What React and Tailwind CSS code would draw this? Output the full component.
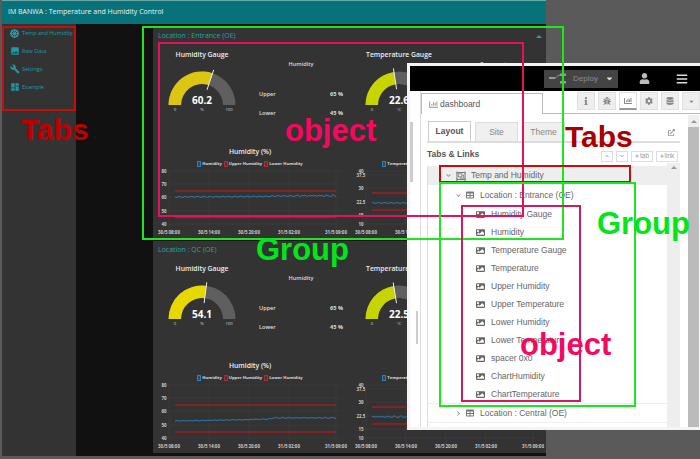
import React from "react";
import { MdBuild, MdDashboard, MdPhoto } from "react-icons/md";
import {
    FaBars, FaBug, FaChartBar, FaCog, FaDatabase, FaExternalLinkAlt, FaInfo, FaPlus,
    FaRegObjectGroup, FaTable, FaUser, FaImage, FaChevronDown, FaChevronRight, FaChevronUp, FaCaretDown,
} from "react-icons/fa";

const navItems = [
    { label: "Temp and Humidity", icon: <WheelIcon /> },
    { label: "Raw Data", icon: <MdPhoto size={10} /> },
    { label: "Settings", icon: <MdBuild size={10} /> },
    { label: "Example", icon: <MdDashboard size={10} /> },
];

const widgets = [
    "Humidity Gauge", "Humidity", "Temperature Gauge", "Temperature", "Upper Humidity",
    "Upper Temperature", "Lower Humidity", "Lower Temperature", "spacer 0x0", "ChartHumidity", "ChartTemperature",
];

const xLabels = ["30/5 08:00", "30/5 14:00", "30/5 20:00", "31/5 02:00", "31/5 09:00"];

function WheelIcon() {
    return (
        <svg width="9" height="9" viewBox="0 0 18 18" fill="none" stroke="currentColor">
            <circle cx="9" cy="9" r="7" strokeWidth="3.5" />
            <path d="M9 1v16M1 9h16M3.5 3.5l11 11M14.5 3.5l-11 11" strokeWidth="2" />
        </svg>
    );
}

// Small repeatable noise so the series keep the same shape on each render
function noisyLine(x0, x1, baseY, amp, seed, drift = 0) {
    const pts = [];
    for (let x = x0; x <= x1; x += 1) {
        const t = (x - x0) / (x1 - x0);
        const n = Math.sin(x * 2.7 + seed) * 0.5 + Math.sin(x * 7.3 + seed * 2) * 0.5;
        const spike = Math.sin(x * 0.9 + seed) > 0.97 ? -amp * 2 : 0;
        const step = t > 0.6 ? drift : drift * t;
        pts.push(`${x.toFixed(1)},${(baseY + n * amp + step + spike).toFixed(1)}`);
    }
    return pts.join(" ");
}

function Gauge({ value, max, unit, color, fraction }) {
    const cx = 40, cy = 38, R = 33.5, r = 21;
    const a = Math.PI * (1 - fraction);
    const px = (rad, ang) => (cx + rad * Math.cos(ang)).toFixed(1);
    const py = (rad, ang) => (cy - rad * Math.sin(ang)).toFixed(1);
    return (
        <svg width="80" height="48" viewBox="0 0 80 48" className="block">
            <path d={`M${cx - R} ${cy}A${R} ${R} 0 0 1 ${cx + R} ${cy}L${cx + r} ${cy}A${r} ${r} 0 0 0 ${cx - r} ${cy}Z`} fill="#5f5f5f" />
            <path d={`M${cx - R} ${cy}A${R} ${R} 0 0 1 ${px(R, a)} ${py(R, a)}L${px(r, a)} ${py(r, a)}A${r} ${r} 0 0 0 ${cx - r} ${cy}Z`} fill={color} />
            <line x1={px(16, a)} y1={py(16, a)} x2={px(37, a)} y2={py(37, a)} stroke="#eeeeee" strokeWidth="1" />
            <text x={cx} y={cy - 1} textAnchor="middle" fontSize="10" fontWeight="700" fill="#ffffff">{value}</text>
            <text x={cx - 27} y={cy + 6} textAnchor="middle" fontSize="4.2" fill="#dddddd">0</text>
            <text x={cx} y={cy + 6} textAnchor="middle" fontSize="4.2" fill="#dddddd">{unit}</text>
            <text x={cx + 27} y={cy + 6} textAnchor="middle" fontSize="4.2" fill="#dddddd">{max}</text>
        </svg>
    );
}

function Chart({ yLabels, upper, lower, baseY, amp, seed, drift, lineEnd }) {
    return (
        <svg width="190" height="68" viewBox="0 0 190 68" className="block">
            {yLabels.map(([label, y]) => (
                <g key={label}>
                    <text x="6" y={y + 1.7} textAnchor="middle" fontSize="4.4" fontWeight="700" fill="#cccccc">{label}</text>
                    <line x1="11" x2="183" y1={y} y2={y} stroke="#434343" strokeWidth="0.5" />
                </g>
            ))}
            {[11, 51, 91, 131, 178].map((x, i) => (
                <g key={x}>
                    <line x1={x} x2={x} y1="1" y2="60" stroke="#434343" strokeWidth="0.5" />
                    <text x={x} y="65" textAnchor="middle" fontSize="4.4" fontWeight="700" fill="#cccccc">{xLabels[i]}</text>
                </g>
            ))}
            <line x1="17" x2={lineEnd} y1={upper} y2={upper} stroke="#a11f25" strokeWidth="1.3" />
            <line x1="17" x2={lineEnd} y1={lower} y2={lower} stroke="#a11f25" strokeWidth="1.3" />
            <polyline points={noisyLine(17, lineEnd, baseY, amp, seed, drift)} fill="none" stroke="#2f7fb8" strokeWidth="0.9" />
        </svg>
    );
}

function Legend({ items }) {
    return (
        <div className="flex items-center justify-center gap-[2px] h-[10px] pr-[13px] text-[4.2px] font-bold text-[#dddddd] whitespace-nowrap">
            {items.map((item, i) => (
                <span key={item} className="flex items-center gap-[1px]">
                    <span className={`w-[4px] h-[6px] border ${i === 0 ? "border-[#2f7fb8] bg-[#2f7fb8]/30" : "border-[#b02a2f] bg-[#b02a2f]/30"}`} />
                    {item}
                </span>
            ))}
        </div>
    );
}

function Widget({ gaugeTitle, tableTitle, gauge, upper, lower, chartTitle, legend, chart }) {
    return (
        <div className="w-[197px] shrink-0 flex flex-col">
            <div className="flex h-[116px]">
                <div className="w-[88px] flex flex-col items-center">
                    <div className="h-[11px] mt-[4px] text-[6.8px] font-semibold leading-[11px] text-[#eeeeee] whitespace-nowrap">{gaugeTitle}</div>
                    <div className="mt-[7px]"><Gauge {...gauge} /></div>
                </div>
                <div className="w-[97px] pl-[13px] flex flex-col text-[5.6px] font-semibold text-[#dddddd]">
                    <div className="text-center mt-[15px] h-[24px]">{tableTitle}</div>
                    <div className="flex justify-between mt-[6px]"><span>Upper</span><span className="font-bold">{upper}</span></div>
                    <div className="flex justify-between mt-[11px]"><span>Lower</span><span className="font-bold">{lower}</span></div>
                </div>
            </div>
            <div className="text-center h-[13px] mt-[-15px] pr-[13px] text-[6.8px] font-semibold leading-[12px] text-[#eeeeee] whitespace-nowrap">{chartTitle}</div>
            <Legend items={legend} />
            <Chart {...chart} />
        </div>
    );
}

function LocationCard({ title, collapse, humidity, temperature, className }) {
    const tableH = { gaugeTitle: "Humidity Gauge", tableTitle: "Humidity", upper: "65 %", lower: "45 %", chartTitle: "Humidity (%)", legend: ["Humidity", "Upper Humidity", "Lower Humidity"] };
    const tableT = { gaugeTitle: "Temperature Gauge", tableTitle: "Temperature", upper: "30 °C", lower: "15 °C", chartTitle: "Temperature (°C)", legend: ["Temperature", "Upper Temperature", "Lower Temperature"] };
    return (
        <section className={`bg-[#333333] ${className}`}>
            <div className="flex items-center justify-between h-[18px] pl-[5px] pr-[4px] text-[7px] font-medium text-[#1fa5b0]">
                <span>{title}</span>
                {collapse && <CaretUp />}
            </div>
            <div className="flex pl-[5px]">
                <Widget {...tableH} {...humidity} />
                <Widget {...tableT} {...temperature} />
            </div>
        </section>
    );
}

function CaretUp() {
    return <span className="w-0 h-0 border-x-[3px] border-x-transparent border-b-[3px] border-b-[#1fa5b0]" />;
}

function Dashboard() {
    const humidityY = [["80", 2], ["70", 15], ["60", 28], ["50", 42], ["40", 55]];
    const tempY = [["40", 2], ["37.5", 6], ["30", 19], ["22.5", 33], ["15", 46], ["10", 55]];
    return (
        <div className="ml-[2px] w-[544px] h-[456px] flex flex-col font-['Open_Sans',sans-serif]">
            <header className="h-[24px] shrink-0 bg-[#08727a] border-t border-[#6aa9a9] flex items-center pl-[6px] text-[7px] font-medium text-[#e8f4f4]">
                IM BANWA : Temperature and Humidity Control
            </header>
            <div className="flex flex-1 min-h-0">
                <nav className="w-[74px] shrink-0 bg-[#333333] flex flex-col">
                    {navItems.map((item) => (
                        <div key={item.label} className="h-[18px] flex items-center gap-[2px] pl-[7px] text-[5.5px] text-[#1f9aa5] whitespace-nowrap">
                            <span className="w-[11px] flex justify-center">{item.icon}</span>
                            {item.label}
                        </div>
                    ))}
                </nav>
                <main className="flex-1 bg-[#111111] pl-[77px] pt-[3px] flex flex-col gap-[3px] overflow-hidden">
                    <LocationCard
                        title="Location : Entrance (OE)"
                        collapse
                        className="h-[211px]"
                        humidity={{
                            gauge: { value: "60.2", max: "100", unit: "%", color: "#dcc612", fraction: 0.602 },
                            chart: { yLabels: humidityY, upper: 22, lower: 48.5, baseY: 28, amp: 0.9, seed: 1, drift: -1, lineEnd: 178 },
                        }}
                        temperature={{
                            gauge: { value: "22.6", max: "50", unit: "°C", color: "#c6d400", fraction: 0.452 },
                            chart: { yLabels: tempY, upper: 24, lower: 41, baseY: 34, amp: 0.8, seed: 3, drift: 0, lineEnd: 178 },
                        }}
                    />
                    <LocationCard
                        title="Location : QC (OE)"
                        className="h-[212px]"
                        humidity={{
                            gauge: { value: "54.1", max: "100", unit: "%", color: "#e6d800", fraction: 0.541 },
                            chart: { yLabels: humidityY, upper: 22, lower: 49, baseY: 38, amp: 0.5, seed: 2, drift: -3, lineEnd: 178 },
                        }}
                        temperature={{
                            gauge: { value: "22.5", max: "50", unit: "°C", color: "#c6d400", fraction: 0.45 },
                            chart: { yLabels: tempY, upper: 24, lower: 41, baseY: 34, amp: 0.7, seed: 4, drift: 0, lineEnd: 178 },
                        }}
                    />
                </main>
            </div>
        </div>
    );
}

function IconButton({ children, active }) {
    return (
        <span className={`w-[18px] h-[18px] flex items-center justify-center border border-[#e0e0e0] text-[#888888] ${active ? "bg-white border-b-2 border-b-[#999999]" : "bg-[#eeeeee]"}`}>
            {children}
        </span>
    );
}

function SmallButton({ children, className = "" }) {
    return (
        <span className={`h-[11px] flex items-center justify-center gap-[1px] border border-[#dddddd] text-[6.5px] font-normal text-[#999999] ${className}`}>
            {children}
        </span>
    );
}

function NodeRedPanel() {
    return (
        <aside className="absolute left-[407px] top-[63px] w-[293px] h-[367px] bg-white border-[3px] border-r-0 border-[#f4f4f4] flex flex-col font-['Liberation_Sans',sans-serif] overflow-hidden">
            <div className="h-[25px] shrink-0 bg-black flex items-center">
                <div className="ml-[134px] w-[74px] h-[18px] bg-[#444444] flex items-center pl-[5px] text-[8px] text-[#8c8c8c]">
                    <svg width="17" height="12" viewBox="0 0 17 12" fill="none" className="mr-[7px]">
                        <rect x="0" y="4" width="6" height="2" fill="#999999" />
                        <path d="M6 5c2 0 2-3 5-3" stroke="#999999" />
                        <rect x="11" y="0.5" width="6" height="2.5" fill="#999999" />
                        <rect x="11" y="8" width="6" height="2.5" fill="#999999" />
                    </svg>
                    Deploy
                    <FaCaretDown size={9} className="ml-[7px] text-[#dddddd]" />
                </div>
                <FaUser size={11} className="ml-[21px] text-[#bbbbbb]" />
                <FaBars size={12} className="ml-[26px] text-[#dddddd]" />
            </div>
            <div className="flex flex-1 min-h-0">
                <div className="w-[10px] shrink-0 relative">
                    <span className="absolute left-0 top-[31px] w-[3px] h-[60px] bg-[#cccccc]" />
                    <span className="absolute left-[6px] top-[220px] w-[2px] h-[33px] bg-[#cccccc]" />
                </div>
                <div className="flex-1 min-w-0 border-l border-[#dddddd] flex flex-col">
                    <div className="h-[23px] shrink-0 border-b border-[#bbbbbb] relative">
                        <div className="absolute left-0 top-[2px] w-[122px] h-[21px] bg-white border border-b-0 border-[#bbbbbb] flex items-center pl-[7px] gap-[2px] text-[8.5px] text-[#555555]">
                            <FaChartBar size={9} className="text-[#aaaaaa]" />
                            dashboard
                        </div>
                        <div className="absolute left-[156px] top-[1px] flex gap-[3px]">
                            <IconButton><FaInfo size={8} /></IconButton>
                            <IconButton><FaBug size={8} /></IconButton>
                            <IconButton active><FaChartBar size={8} /></IconButton>
                            <IconButton><FaCog size={8} /></IconButton>
                            <IconButton><FaDatabase size={8} /></IconButton>
                            <IconButton><FaCaretDown size={7} /></IconButton>
                        </div>
                    </div>
                    <div className="flex flex-1 min-h-0">
                        <div className="w-[259px] shrink-0 pl-[6px] pt-[9px] flex flex-col">
                            <div className="h-[20px] shrink-0 border-b-2 border-[#dddddd] flex items-end gap-[4px] pl-[1px] pr-[2px] text-[8.5px] w-[253px]">
                                <span className="w-[43px] h-[20px] bg-white border border-b-0 border-[#cccccc] flex items-center justify-center font-bold text-[#555555]">Layout</span>
                                <span className="w-[43px] h-[19px] bg-[#f0f0f0] border border-b-0 border-[#dddddd] flex items-center justify-center text-[#888888]">Site</span>
                                <span className="w-[43px] h-[19px] bg-[#f0f0f0] border border-b-0 border-[#dddddd] flex items-center justify-center text-[#888888]">Theme</span>
                                <FaExternalLinkAlt size={7} className="ml-auto mb-[5px] mr-[3px] text-[#999999]" />
                            </div>
                            <div className="h-[23px] shrink-0 flex items-center w-[251px] text-[8.5px] font-bold text-[#555555]">
                                Tabs &amp; Links
                                <div className="ml-auto flex gap-[3px] pt-[3px]">
                                    <SmallButton className="w-[12px]"><FaChevronUp size={4} /></SmallButton>
                                    <SmallButton className="w-[12px]"><FaChevronDown size={4} /></SmallButton>
                                    <SmallButton className="w-[22px]"><FaPlus size={4} />tab</SmallButton>
                                    <SmallButton className="w-[22px]"><FaPlus size={4} />link</SmallButton>
                                </div>
                            </div>
                            <div className="w-[240px] border-l border-[#dddddd] text-[8.5px] text-[#666666]">
                                <div className="h-[19px] bg-[#eeeeee] flex items-center pl-[18px]">
                                    <FaChevronDown size={5} className="text-[#888888]" />
                                    <FaRegObjectGroup size={10} className="ml-[5px] mr-[5px] text-[#777777]" />
                                    Temp and Humidity
                                </div>
                                <div className="h-[20px] flex items-center pl-[28px]">
                                    <FaChevronDown size={5} className="text-[#888888]" />
                                    <FaTable size={8} className="ml-[5px] mr-[6px] text-[#777777]" />
                                    Location : Entrance (OE)
                                </div>
                                {widgets.map((name) => (
                                    <div key={name} className="h-[18px] flex items-center pl-[48px] gap-[6px]">
                                        <FaImage size={9} className="text-[#666666]" />
                                        {name}
                                    </div>
                                ))}
                                <div className="h-[19px] border-t border-[#eeeeee] flex items-center pl-[28px]">
                                    <FaChevronRight size={5} className="text-[#888888]" />
                                    <FaTable size={8} className="ml-[5px] mr-[6px] text-[#777777]" />
                                    Location : Central (OE)
                                </div>
                                <div className="h-[19px] border-t border-[#eeeeee] flex items-center pl-[28px]">
                                    <FaChevronRight size={5} className="text-[#888888]" />
                                    <FaTable size={8} className="ml-[5px] mr-[6px] text-[#777777]" />
                                    Location : QC (OE)
                                </div>
                            </div>
                        </div>
                        <div className="w-[13px] shrink-0 ml-[-13px] mt-[49px] bg-[#eeeeee] flex justify-center pt-[3px]">
                            <span className="w-0 h-0 border-x-[3px] border-x-transparent border-b-[3px] border-b-[#999999]" />
                        </div>
                        <div className="w-[11px] ml-auto mr-[1px] mt-[1px] bg-[#eeeeee] flex flex-col items-center">
                            <span className="h-[12px] flex items-center"><span className="w-0 h-0 border-x-[3px] border-x-transparent border-b-[3px] border-b-[#999999]" /></span>
                            <span className="w-full flex-1 bg-[#bbbbbb]" />
                        </div>
                    </div>
                </div>
            </div>
        </aside>
    );
}

function Annotations() {
    const label = "absolute font-['Liberation_Sans',sans-serif] font-bold leading-none";
    return (
        <div className="absolute inset-0 pointer-events-none">
            <div className="absolute left-[2px] top-[26px] w-[74px] h-[85px] border-2 border-[#c40f0f]" />
            <div className="absolute left-[142px] top-[26px] w-[422px] h-[214px] border-2 border-[#1ee61e]" />
            <div className="absolute left-[158px] top-[42px] w-[366px] h-[175px] border-2 border-[#e5115f]" />
            <div className="absolute left-[439px] top-[165px] w-[192px] h-[18px] border-2 border-[#c40f0f]" />
            <div className="absolute left-[439px] top-[182px] w-[197px] h-[225px] border-2 border-[#1ee61e]" />
            <div className="absolute left-[461px] top-[205px] w-[120px] h-[197px] border-2 border-[#cf1c5e]" />
            <span className={`${label} left-[21px] top-[115px] text-[30px] text-[#c00000]`}>Tabs</span>
            <span className={`${label} left-[285px] top-[115px] text-[31px] text-[#f5095f]`}>object</span>
            <span className={`${label} left-[256px] top-[234px] text-[31px] text-[#00e61a]`}>Group</span>
            <span className={`${label} left-[565px] top-[122px] text-[30px] text-[#a80000]`}>Tabs</span>
            <span className={`${label} left-[597px] top-[208px] text-[31px] text-[#00e61a]`}>Group</span>
            <span className={`${label} left-[520px] top-[329px] text-[31px] text-[#f5095f]`}>object</span>
        </div>
    );
}

export default function App() {
    return (
        <div className="relative w-[700px] h-[459px] bg-[#5a5a5a] overflow-hidden">
            <Dashboard />
            <NodeRedPanel />
            <Annotations />
        </div>
    );
}
